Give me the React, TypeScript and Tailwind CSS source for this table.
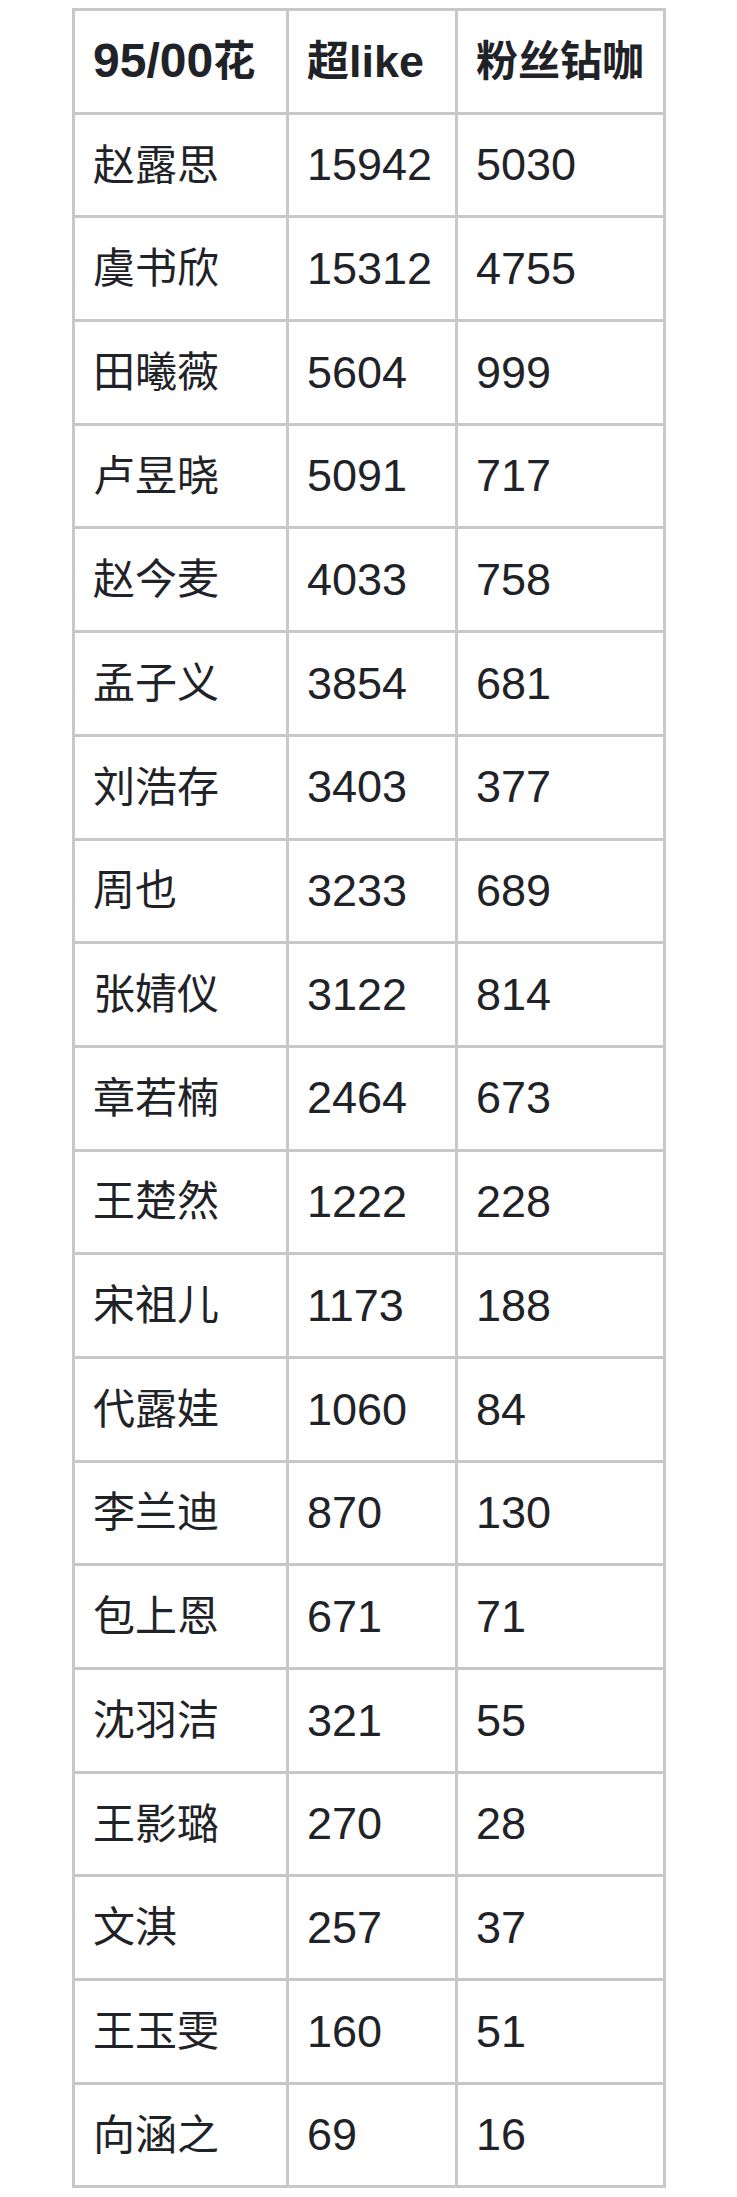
const rows: [string, string, string][] = [
  ['赵露思', '15942', '5030'],
  ['虞书欣', '15312', '4755'],
  ['田曦薇', '5604', '999'],
  ['卢昱晓', '5091', '717'],
  ['赵今麦', '4033', '758'],
  ['孟子义', '3854', '681'],
  ['刘浩存', '3403', '377'],
  ['周也', '3233', '689'],
  ['张婧仪', '3122', '814'],
  ['章若楠', '2464', '673'],
  ['王楚然', '1222', '228'],
  ['宋祖儿', '1173', '188'],
  ['代露娃', '1060', '84'],
  ['李兰迪', '870', '130'],
  ['包上恩', '671', '71'],
  ['沈羽洁', '321', '55'],
  ['王影璐', '270', '28'],
  ['文淇', '257', '37'],
  ['王玉雯', '160', '51'],
  ['向涵之', '69', '16'],
]

const cell = 'h-[103.7px] border-r-[3px] border-b-[3px] border-[#c8c8c8] pl-[18px] flex items-center'

export default function App() {
  return (
    <div
      className="w-[737px] h-[2197px] bg-white text-[#1f2328] pt-[8px] pl-[72px]"
      style={{ fontFamily: '"Liberation Sans", "Noto Sans CJK SC", sans-serif' }}
    >
      <div className="w-[594px] border-l-[3px] border-t-[3px] border-[#c8c8c8] grid grid-cols-[214px_169px_208px]">
        {/* header */}
        <div className={`${cell} font-bold`}>
          <span className="text-[48px]">95/00</span>
          <span className="text-[42px]">花</span>
        </div>
        <div className={`${cell} font-bold`}>
          <span className="text-[42px]">超</span>
          <span className="text-[45px]">like</span>
        </div>
        <div className={`${cell} font-bold text-[42px]`}>粉丝钻咖</div>
        {rows.map(([name, like, fans]) => (
          <>
            <div key={name + 'a'} className={`${cell} text-[42px]`}>{name}</div>
            <div key={name + 'b'} className={`${cell} text-[45px]`}>{like}</div>
            <div key={name + 'c'} className={`${cell} text-[45px]`}>{fans}</div>
          </>
        ))}
      </div>
    </div>
  )
}
